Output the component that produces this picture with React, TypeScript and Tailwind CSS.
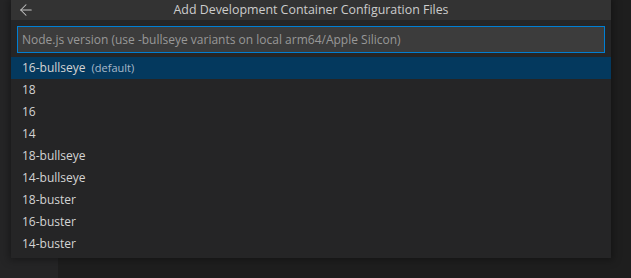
import { ArrowLeft } from "lucide-react";

const items = [
  "16-bullseye",
  "18",
  "16",
  "14",
  "18-bullseye",
  "14-bullseye",
  "18-buster",
  "16-buster",
  "14-buster",
];

const App = () => {
  return (
    <div
      className="relative w-[631px] h-[278px] flex overflow-hidden"
      style={{ fontFamily: '"Open Sans", "Noto Sans", sans-serif' }}
    >
      {/* workbench behind the quick pick */}
      <div className="w-[58px] h-full bg-[#252526]" />
      <div className="flex-1 h-full bg-[#1e1e1e]" />

      {/* quick input widget */}
      <div className="absolute left-[11px] top-0 w-[600px] h-[258px] bg-[#252526] shadow-[0_0_8px_2px_rgba(0,0,0,0.36)] flex flex-col">
        <div className="relative h-[20px] bg-[#333333] flex items-center justify-center">
          <ArrowLeft className="absolute left-[6px] top-[1px] w-[18px] h-[18px] text-[#c5c5c5]" strokeWidth={1.4} />
          <span className="text-[12.4px] text-[#cccccc] leading-none">Add Development Container Configuration Files</span>
        </div>
        <div className="px-[6px] pt-[6px] pb-[4px]">
          <div className="h-[27px] border border-[#007fd4] bg-[#3c3c3c] flex items-center px-[4px]">
            <span className="text-[12px] text-[#989898] leading-none">Node.js version (use -bullseye variants on local arm64/Apple Silicon)</span>
          </div>
        </div>
        <ul className="flex flex-col">
          {items.map((item, i) => (
            <li
              key={item}
              className={`h-[22px] flex items-center px-[11px] text-[12px] text-[#d4d4d4] ${i === 0 ? "bg-[#04395e]" : ""}`}
            >
              <span>{item}</span>
              {i === 0 && <span className="ml-[6px] text-[11px] text-[#a8bacb]">(default)</span>}
            </li>
          ))}
        </ul>
      </div>
    </div>
  );
};

export default App;
